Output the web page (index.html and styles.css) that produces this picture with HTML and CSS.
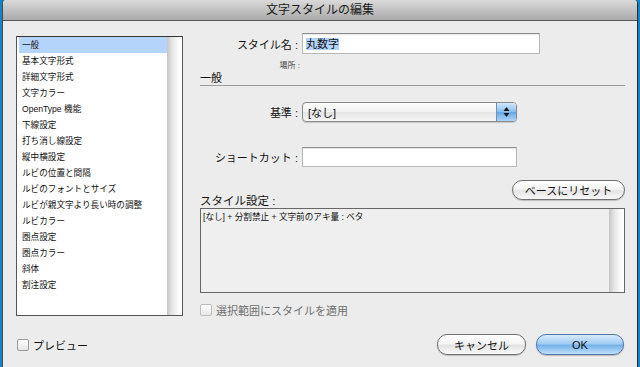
FILE: index.html
```html
<!DOCTYPE html>
<html lang="ja">
<head>
    <meta charset="UTF-8">
    <meta name="viewport" content="width=device-width, initial-scale=1.0">
    <title>文字スタイルの編集</title>
    <link rel="stylesheet" href="styles.css">
</head>
<body>
    <div class="window">
        <div class="titlebar">文字スタイルの編集</div>
        <div class="main">
            <div class="category-list">
                <ul class="items">
                    <li class="selected">一般</li>
                    <li>基本文字形式</li>
                    <li>詳細文字形式</li>
                    <li>文字カラー</li>
                    <li>OpenType 機能</li>
                    <li>下線設定</li>
                    <li>打ち消し線設定</li>
                    <li>縦中横設定</li>
                    <li>ルビの位置と間隔</li>
                    <li>ルビのフォントとサイズ</li>
                    <li>ルビが親文字より長い時の調整</li>
                    <li>ルビカラー</li>
                    <li>圏点設定</li>
                    <li>圏点カラー</li>
                    <li>斜体</li>
                    <li>割注設定</li>
                </ul>
                <div class="scroll-track"></div>
            </div>
            <div class="panel">
                <div class="field-row">
                    <span class="field-label">スタイル名 :</span>
                    <div class="text-input name-input"><span class="selection">丸数字</span></div>
                </div>
                <div class="field-row location-row">
                    <span class="field-label">場所 :</span>
                </div>
                <div class="section-title">一般</div>
                <div class="field-row based-row">
                    <span class="field-label">基準 :</span>
                    <div class="popup">
                        <span>[なし]</span>
                        <span class="stepper">
                            <svg width="7" height="12" viewBox="0 0 7 12">
                                <path d="M3.5 1 L6.5 5 L0.5 5 Z" fill="#1a1a1a"/>
                                <path d="M3.5 11 L6.5 7 L0.5 7 Z" fill="#1a1a1a"/>
                            </svg>
                        </span>
                    </div>
                </div>
                <div class="field-row shortcut-row">
                    <span class="field-label">ショートカット :</span>
                    <div class="text-input shortcut-input"></div>
                </div>
                <div class="settings-head">
                    <span class="settings-label">スタイル設定 :</span>
                    <button class="pill-button reset-button">ベースにリセット</button>
                </div>
                <div class="settings-box">
                    <div class="settings-text">[なし] + 分割禁止 + 文字前のアキ量 : ベタ</div>
                    <div class="scroll-track"></div>
                </div>
                <label class="check disabled"><span class="box"></span>選択範囲にスタイルを適用</label>
            </div>
        </div>
        <div class="footer">
            <label class="check"><span class="box"></span>プレビュー</label>
            <div class="buttons">
                <button class="pill-button cancel-button">キャンセル</button>
                <button class="pill-button ok-button">OK</button>
            </div>
        </div>
    </div>
</body>
</html>
```

FILE: styles.css
```css
body {
    margin: 0;
    background-color: #1683c7;
    font-family: 'Liberation Sans', 'Noto Sans CJK JP', sans-serif;
    font-size: 11px;
    color: #111;
    overflow: hidden;
}

.window {
    margin-left: 2px;
    width: 634px;
    height: 367px;
    border-left: 1px solid #4a4a4a;
    border-right: 1px solid #2a2a2a;
    border-radius: 4px 4px 0 0;
    background-color: #ececec;
    overflow: hidden;
}

.titlebar {
    height: 20px;
    line-height: 20px;
    text-align: center;
    font-size: 12px;
    color: #1a1a1a;
    background: linear-gradient(#dadada, #aaaaaa);
    border-bottom: 1px solid #585858;
}

.main {
    display: grid;
    grid-template-columns: 167px 425px;
    column-gap: 17px;
    padding: 12px 0 0 13px;
}

/* left category list */
.category-list {
    margin-top: 3px;
    height: 280px;
    box-sizing: border-box;
    border: 1px solid #555;
    border-top-color: #333;
    background-color: #fff;
    display: flex;
}

.items {
    list-style: none;
    margin: 0;
    padding: 0 0 0 2px;
    flex: 1;
}

.items li {
    height: 16px;
    line-height: 16px;
    padding-left: 3px;
    font-size: 8.6px;
    white-space: nowrap;
}

.items li.selected {
    background-color: #b5d4fb;
}

.scroll-track {
    width: 15px;
    flex: none;
    background: linear-gradient(to right, #c6c6c6, #e6e6e6 35%, #f9f9f9 75%, #fff);
}

/* right panel */
.panel {
    display: flex;
    flex-direction: column;
}

.field-row {
    display: flex;
    align-items: center;
    gap: 4px;
}

.field-label {
    width: 98px;
    flex: none;
    text-align: right;
    white-space: nowrap;
}

.text-input {
    box-sizing: border-box;
    background-color: #fff;
    border: 1px solid #b8b8b8;
    border-top-color: #8e8e8e;
    box-shadow: inset 0 1px 1px rgba(0, 0, 0, 0.1);
}

.name-input {
    width: 238px;
    height: 21px;
    padding: 3px 0 0 3px;
    line-height: 14px;
}

.selection {
    background-color: #b3d4fd;
}

.location-row {
    margin-top: 5px;
    height: 10px;
}

.location-row .field-label {
    width: 100px;
    font-size: 8px;
    color: #444;
}

.section-title {
    margin-top: 2px;
    line-height: 14px;
    border-bottom: 1px solid #9c9c9c;
}

.based-row {
    margin-top: 16px;
}

.popup {
    width: 215px;
    height: 20px;
    box-sizing: border-box;
    border: 1px solid #8a8a8a;
    border-radius: 4px;
    background: linear-gradient(#fdfdfd, #f1f1f1 50%, #e4e4e4 51%, #f6f6f6);
    box-shadow: 0 1px 1px rgba(0, 0, 0, 0.15);
    display: flex;
    align-items: center;
    justify-content: space-between;
    padding-left: 5px;
    overflow: hidden;
}

.stepper {
    width: 19px;
    align-self: stretch;
    display: flex;
    align-items: center;
    justify-content: center;
    border-left: 1px solid #6d8fba;
    background: linear-gradient(#d3e8fb, #8dbfee 48%, #6aa7e4 52%, #acd5f8);
}

.shortcut-row {
    margin-top: 25px;
}

.shortcut-input {
    width: 215px;
    height: 20px;
}

.settings-head {
    margin-top: 13px;
    height: 28px;
    display: flex;
    justify-content: space-between;
}

.settings-label {
    align-self: flex-end;
    line-height: 14px;
    font-size: 11.5px;
}

.pill-button {
    height: 20px;
    box-sizing: border-box;
    padding: 0;
    border: 1px solid #707070;
    border-radius: 10px;
    background: linear-gradient(#ffffff, #f4f4f4 45%, #e4e4e4 55%, #f9f9f9);
    box-shadow: 0 1px 1px rgba(0, 0, 0, 0.2);
    font-family: inherit;
    font-size: 11px;
    color: #111;
}

.reset-button {
    width: 113px;
}

.settings-box {
    height: 85px;
    box-sizing: border-box;
    border: 1px solid #666;
    background-color: #efefef;
    display: flex;
}

.settings-text {
    flex: 1;
    padding: 2px 2px 0;
    font-size: 8.6px;
    line-height: 12px;
}

.check {
    display: flex;
    align-items: center;
    gap: 4px;
    height: 14px;
}

.panel .check {
    margin-top: 10px;
}

.check .box {
    width: 12px;
    height: 12px;
    box-sizing: border-box;
    border: 1px solid #9a9a9a;
    border-radius: 2px;
    background: linear-gradient(#ffffff, #e6e6e6);
}

.check.disabled {
    color: #6e6e6e;
}

.check.disabled .box {
    border-color: #bdbdbd;
}

/* bottom bar */
.footer {
    margin-top: 17px;
    height: 21px;
    padding: 0 13px 0 14px;
    display: flex;
    justify-content: space-between;
    align-items: center;
}

.buttons {
    display: flex;
    gap: 10px;
}

.cancel-button {
    width: 89px;
    height: 21px;
}

.ok-button {
    width: 88px;
    height: 21px;
    border-color: #5577a6;
    background: linear-gradient(#d6ebfc, #a2cdf3 45%, #77b3eb 55%, #bde0f9);
}
```
